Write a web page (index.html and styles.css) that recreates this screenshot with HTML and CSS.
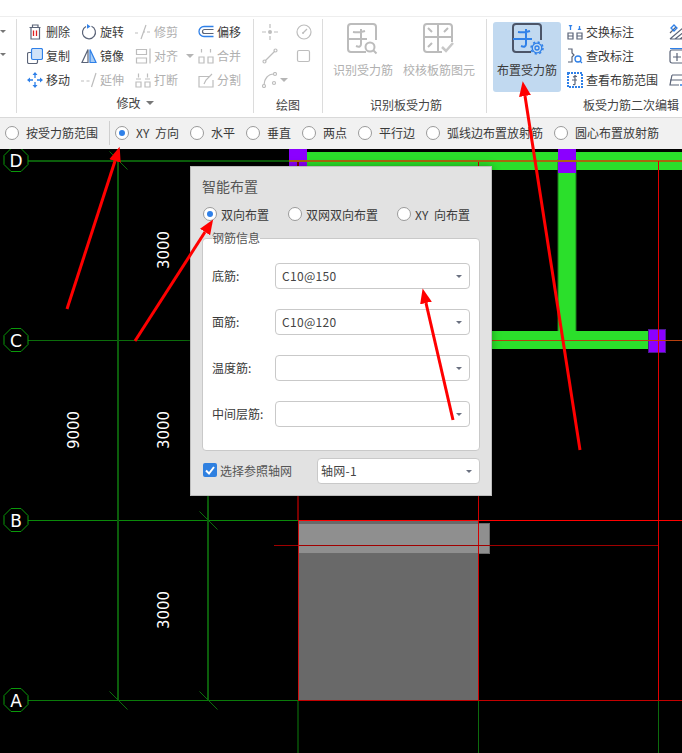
FILE: index.html
```html
<!DOCTYPE html>
<html lang="zh">
<head>
<meta charset="utf-8">
<title>智能布置</title>
<link rel="stylesheet" href="styles.css">
</head>
<body>
<div class="page">
  <div class="topbar"></div>

  <div class="ribbon">
    <div class="group group-cut">
      <span class="mini-caret"></span>
      <span class="mini-caret"></span>
    </div>

    <div class="group group-modify">
      <div class="tool-grid">
        <div class="tool"><svg class="ic" viewBox="0 0 16 16"><path class="s-dark" d="M2.5 3.5h11M4 3.5V15h8.500V3.500M5.500 3.500V1h5.500v2.500"/><path class="s-red" d="M6.500 6.500v5.500M9.500 6.500v5.500"/></svg>删除</div>
        <div class="tool"><svg class="ic" viewBox="0 0 16 16"><path class="s-dark" d="M10.500 2.300A6.500 6.500 0 1 1 5 2.500"/><path class="f-blue" d="M6 0l3.500 2.500L6 4.800z"/></svg>旋转</div>
        <div class="tool off"><svg class="ic" viewBox="0 0 16 16"><path class="s-gray" d="M11 1L6 15M0 9h3M8 8h2M12 8h3"/></svg>修剪</div>
        <div class="tool"><svg class="ic" viewBox="0 0 16 16"><path class="s-blue" d="M15.500 2.500H6a5 5 0 0 0 0 10h9.500"/><path class="s-dark" d="M15.500 5.500H6.500a2 2 0 0 0 0 4h9"/></svg>偏移</div>

        <div class="tool"><svg class="ic" viewBox="0 0 16 16"><rect class="s-dark" x="0.500" y="4.500" width="10" height="11" rx="1.500"/><rect class="f-tint" x="4.500" y="0.500" width="11" height="11" rx="1.500"/></svg>复制</div>
        <div class="tool"><svg class="ic" viewBox="0 0 16 16"><path class="s-dark" d="M7 1.500L1 14.500h6z"/><path class="f-tintb" d="M9 1.500l6 13H9z"/></svg>镜像</div>
        <div class="tool off tool-caret"><svg class="ic" viewBox="0 0 16 16"><path class="s-gray" d="M1.500 1.500h10v5h-10zM1.500 10h10v5h-10zM15 .5v15"/></svg>对齐<span class="caret caret-gray"></span></div>
        <div class="tool off"><svg class="ic" viewBox="0 0 16 16"><path class="s-gray" d="M1 9h5v6H1zM10 9h5v6h-5zM3.500 1v3.500M12.500 1v3.500"/></svg>合并</div>

        <div class="tool"><svg class="ic" viewBox="0 0 16 16"><path class="s-blue" d="M8 3v3M8 10v3M3 8h3M10 8h3"/><path class="f-blue" d="M8 0l2.500 3h-5zM8 16l2.500-3h-5zM0 8l3-2.500v5zM16 8l-3-2.500v5z"/></svg>移动</div>
        <div class="tool off"><svg class="ic" viewBox="0 0 16 16"><path class="s-gray" d="M15 1l-4.500 14M0 9h3M5.500 9h3"/></svg>延伸</div>
        <div class="tool off"><svg class="ic" viewBox="0 0 16 16"><path class="s-gray" d="M1 10h5v5H1zM10 10h5v5h-5zM3.500 1.500v4M1 7h5M12.500 1.500v4M10 7h5"/></svg>打断</div>
        <div class="tool off"><svg class="ic" viewBox="0 0 16 16"><path class="s-gray" d="M11 4.500H1V15h14V8M6 12l2-4 6-6"/></svg>分割</div>
      </div>
      <div class="group-label label-up">修改<span class="caret caret-label"></span></div>
    </div>

    <div class="group group-draw">
      <div class="draw-grid">
        <svg class="ic" viewBox="0 0 16 16"><circle class="f-gray" cx="8" cy="8" r="2"/><path class="s-gray" d="M8 0v4M8 12v4M0 8h4M12 8h4"/></svg>
        <svg class="ic" viewBox="0 0 16 16"><circle class="s-gray" cx="8" cy="8" r="7"/><path class="s-gray" d="M7 9l4-4"/><circle class="f-gray" cx="7" cy="9" r="1"/></svg>
        <svg class="ic" viewBox="0 0 16 16"><path class="s-gray" d="M3 13L13 3"/><circle class="s-gray" cx="2.500" cy="13.500" r="1.500"/><circle class="s-gray" cx="13.500" cy="2.500" r="1.500"/></svg>
        <svg class="ic" viewBox="0 0 16 16"><rect class="s-gray" x="1.500" y="2.500" width="12" height="11" rx="1.500"/></svg>
        <div class="draw-arc"><svg class="ic" viewBox="0 0 16 16"><path class="s-gray" d="M2 13C2 7 6 2 12 2"/><circle class="s-gray" cx="2" cy="14" r="1.500"/><circle class="s-gray" cx="13" cy="2" r="1.500"/><circle class="s-gray" cx="12" cy="11" r="1.500"/></svg><span class="caret caret-gray"></span></div>
      </div>
      <div class="group-label label-down">绘图</div>
    </div>

    <div class="group group-recog">
      <div class="big-row">
        <div class="big-tool off wide-5">
          <svg class="big-ic" viewBox="0 0 30 30"><path class="s-gray2" d="M19 29H4a3 3 0 0 1-3-3V4a3 3 0 0 1 3-3h22a3 3 0 0 1 3 3v13"/><path class="s-gray2" d="M6 9q6 1 12-1M1 16h19M14 6v15q0 4-5 2"/><circle class="s-gray2" cx="23" cy="24" r="4.500"/><path class="s-gray2" d="M26.500 27.500l3 3"/></svg>
          <span>识别受力筋</span>
        </div>
        <div class="big-tool off wide-6">
          <svg class="big-ic" viewBox="0 0 30 30"><path class="s-gray2" d="M19 29H4a3 3 0 0 1-3-3V4a3 3 0 0 1 3-3h22a3 3 0 0 1 3 3v15M15 1v28M1 14h28M5 5l4 4M25 5l-4 4M5 24l4-4"/><path class="s-gray3" d="M19 24l4 4 7-8"/></svg>
          <span>校核板筋图元</span>
        </div>
      </div>
      <div class="group-label label-down2">识别板受力筋</div>
    </div>

    <div class="group group-edit">
      <div class="edit-row">
        <div class="big-tool active">
          <svg class="big-ic" viewBox="0 0 30 30"><path class="s-dark2" d="M19 29H4a3 3 0 0 1-3-3V4a3 3 0 0 1 3-3h22a3 3 0 0 1 3 3v13"/><path class="s-blue2" d="M6 9q6 1 12-1M1 16h19M14 6v15q0 4-5 2"/><circle class="s-blue" cx="25" cy="25" r="2"/><circle class="s-blue" cx="25" cy="25" r="4.800"/><circle class="s-teeth" cx="25" cy="25" r="6"/></svg>
          <span>布置受力筋</span>
        </div>
        <div class="edit-col">
          <div class="tool"><svg class="ic" viewBox="0 0 16 16"><path class="s-dark" d="M1 9h5v6H1zM10 9h5v6h-5zM1 12h5M10 12h5"/><path class="s-blue" d="M3.500 2v4M12.500 2v4"/><path class="f-blue" d="M1.500 1h4l-2 2.500zM10.500 6h4l-2-2.500z"/></svg>交换标注</div>
          <div class="tool"><svg class="ic" viewBox="0 0 16 16"><path class="s-dark" d="M1 1h4v4l2 2-2 2v5H1"/><circle class="s-blue" cx="11" cy="11" r="3"/><path class="s-blue" d="M13 13l2 2"/></svg>查改标注</div>
          <div class="tool"><svg class="ic ic-box" viewBox="0 0 16 16"><rect class="s-blue-dash" x="1" y="1" width="14" height="14"/><path class="s-dark" d="M6 5q2-1 4-.5M8 3v9q0 1-2 .5M5 8h5"/></svg>查看布筋范围</div>
        </div>
        <div class="edit-col edit-col-cut">
          <svg class="ic" viewBox="0 0 16 16"><path class="s-dark" d="M1 15L15 3M6 15l9-7M1 9l6-6M11 15l4-3M1 15h14"/><path class="s-blue" d="M5 1l3 3-3 3-3-3z"/></svg>
          <svg class="ic" viewBox="0 0 16 16"><rect class="s-dark" x="1" y="2" width="15" height="13" rx="2"/><path class="s-dark" d="M8 5v8M4 9h8"/><path class="s-blue" d="M1 .5h15"/></svg>
          <svg class="ic" viewBox="0 0 16 16"><path class="s-dark" d="M3 3h13M3 3L1 13h9M1 8h14"/><path class="s-blue" d="M11 13h5"/></svg>
        </div>
      </div>
      <div class="group-label label-edit">板受力筋二次编辑</div>
    </div>
  </div>

  <div class="optbar">
    <label class="opt"><span class="radio"></span>按受力筋范围</label>
    <span class="opt-sep"></span>
    <label class="opt"><span class="radio on"></span>XY 方向</label>
    <label class="opt"><span class="radio"></span>水平</label>
    <label class="opt"><span class="radio"></span>垂直</label>
    <label class="opt"><span class="radio"></span>两点</label>
    <label class="opt"><span class="radio"></span>平行边</label>
    <label class="opt"><span class="radio"></span>弧线边布置放射筋</label>
    <label class="opt"><span class="radio"></span>圆心布置放射筋</label>
  </div>

  <div class="canvas">
    <svg class="drawing" viewBox="0 149 682 604" width="682" height="604">
      <!-- slab -->
      <rect x="298" y="520" width="180" height="180" fill="#696969"/>
      <rect x="298.500" y="523.500" width="191" height="30" fill="#8f8f8f" stroke="#6a6a6a"/>

      <!-- beams -->
      <rect x="307" y="152" width="375" height="18" fill="#2bdf2b"/>
      <rect x="558" y="160" width="18" height="180" fill="#2bdf2b" stroke="#1d7a1d" stroke-width="1"/>
      <rect x="480" y="331" width="170" height="18" fill="#2bdf2b"/>
      <rect x="559" y="325" width="16" height="12" fill="#2bdf2b"/>
      <rect x="289" y="149" width="18" height="24" fill="#8b00ff"/>
      <rect x="558" y="149" width="18" height="24" fill="#8b00ff"/>
      <rect x="648.500" y="329.500" width="17" height="23" fill="#8b00ff" stroke="#4b1a90"/>

      <g shape-rendering="crispEdges" fill="none">
        <!-- axes -->
        <path d="M28 160.500H289" stroke="#0b5d0b" stroke-width="2"/>
        <path d="M28 340.500H300" stroke="#0b6d0b"/>
        <path d="M28 520.500H298" stroke="#0a8a0a"/>
        <path d="M28 700.500H298" stroke="#0a7a0a"/>
        <path d="M118 160V700" stroke="#0b5d0b" stroke-width="2"/>
        <path d="M208 480V700" stroke="#0b5d0b" stroke-width="2"/>
        <path d="M298 701V753" stroke="#063f06" stroke-width="2"/>
        <path d="M478.500 701V753" stroke="#0d6a0d"/>
        <path d="M658.500 701V753" stroke="#0d6a0d"/>
        <!-- red layout lines -->
        <path d="M298 160V520" stroke="#7a0000" stroke-width="2"/>
        <path d="M478.500 160V700" stroke="#d00000"/>
        <path d="M658.500 160V700" stroke="#e00000"/>
        <path d="M289 160.500H682" stroke="#a8680f" stroke-width="2"/>
        <path d="M480 340.500H682" stroke="#b8400f"/>
        <path d="M298 520.500H682" stroke="#ff0000" stroke-width="1"/>
        <path d="M274 545.500H658" stroke="#a00000"/>
        <path d="M298 700.500H682" stroke="#c40000"/>
        <path d="M298.500 520V700" stroke="#d01010"/>
      </g>
      <path d="M658.500 161V340" stroke="#e00000" shape-rendering="crispEdges"/>

      <!-- ticks -->
      <g stroke="#0b6d0b" stroke-width="1" fill="none">
        <path d="M109.500 151.500l18 18"/>
        <path d="M199.500 511.500l18 18"/>
        <path d="M109.500 691.500l18 18"/>
        <path d="M199.500 691.500l18 18"/>
      </g>

      <!-- axis bubbles -->
      <g class="bubble">
        <polygon points="11,149 21,149 28,156 28,165 21,172 11,172 4,165 4,156" transform="translate(0 -0.500)"/>
        <polygon points="11,329 21,329 28,336 28,345 21,352 11,352 4,345 4,336" transform="translate(0 -0.500)"/>
        <polygon points="11,509 21,509 28,516 28,525 21,532 11,532 4,525 4,516" transform="translate(0 -0.500)"/>
        <polygon points="11,689 21,689 28,696 28,705 21,712 11,712 4,705 4,696" transform="translate(0 -0.500)"/>
      </g>
      <g class="bubble-text">
        <text x="16" y="166.500">D</text>
        <text x="16" y="346.500">C</text>
        <text x="16" y="526.500">B</text>
        <text x="16" y="706.500">A</text>
      </g>
      <g class="dim-text">
        <text transform="translate(169 250) rotate(-90)">3000</text>
        <text transform="translate(169 430) rotate(-90)">3000</text>
        <text transform="translate(169 610) rotate(-90)">3000</text>
        <text transform="translate(79 430) rotate(-90)">9000</text>
      </g>
    </svg>

    <div class="dialog">
      <div class="dlg-title">智能布置</div>
      <div class="dlg-radios">
        <label class="dlg-opt"><span class="radio on"></span>双向布置</label>
        <label class="dlg-opt"><span class="radio"></span>双网双向布置</label>
        <label class="dlg-opt"><span class="radio"></span>XY 向布置</label>
      </div>
      <div class="rebar-box">
        <div class="legend">钢筋信息</div>
        <div class="field"><span class="field-label">底筋:</span><div class="select">C10@150</div></div>
        <div class="field"><span class="field-label">面筋:</span><div class="select">C10@120</div></div>
        <div class="field"><span class="field-label">温度筋:</span><div class="select"></div></div>
        <div class="field"><span class="field-label">中间层筋:</span><div class="select"></div></div>
      </div>
      <div class="dlg-bottom">
        <label class="check-wrap"><span class="check"><svg viewBox="0 0 14 14" width="14" height="14"><path d="M3 7.500l3 3 5-6.500" fill="none" stroke="#fff" stroke-width="2"/></svg></span>选择参照轴网</label>
        <div class="select select-grid">轴网-1</div>
      </div>
    </div>
  </div>

  <svg class="arrows" viewBox="0 0 682 753" width="682" height="753">
    <defs>
      <marker id="head" markerUnits="userSpaceOnUse" markerWidth="16" markerHeight="14" refX="0" refY="7" orient="auto">
        <path d="M0 1L15 7 0 13z" fill="#ff0000"/>
      </marker>
    </defs>
    <g class="arrow-lines">
      <line x1="67" y1="309" x2="115" y2="161" marker-end="url(#head)"/>
      <line x1="135" y1="341" x2="205" y2="232" marker-end="url(#head)"/>
      <line x1="453" y1="420" x2="426" y2="303" marker-end="url(#head)"/>
      <line x1="580" y1="450" x2="525" y2="96" marker-end="url(#head)"/>
    </g>
  </svg>
</div>
</body>
</html>
```
FILE: styles.css
```css
* { box-sizing: border-box; }

html, body {
  margin: 0;
  padding: 0;
  background: #fff;
}

.page {
  position: relative;
  width: 682px;
  height: 753px;
  overflow: hidden;
  display: flex;
  flex-direction: column;
  font-family: "Noto Sans CJK SC", "Liberation Sans", sans-serif;
  font-size: 12px;
  color: #3a3a3a;
}

.topbar {
  height: 17px;
  flex: none;
  background: #fff;
  border-bottom: 1px solid #eeeeee;
}

/* ribbon */
.ribbon {
  height: 101px;
  flex: none;
  display: flex;
  align-items: flex-start;
  padding-top: 2px;
  background: #fff;
  border-bottom: 1px solid #d9d9d9;
  overflow: hidden;
}

.group {
  height: 94px;
  flex: none;
  display: flex;
  flex-direction: column;
  border-right: 1px solid #dcdcdc;
}

.group-cut {
  width: 17px;
  padding: 11px 0 0 0;
  gap: 20px;
}

.mini-caret {
  width: 0;
  height: 0;
  border-left: 3px solid transparent;
  border-right: 3px solid transparent;
  border-top: 3px solid #777;
}

.group-modify { width: 237px; }
.group-draw { width: 69px; }
.group-recog { width: 164px; }
.group-edit { width: 195px; border-right: 0; overflow: hidden; }

.tool-grid {
  display: grid;
  grid-template-columns: 54px 54px 63px 1fr;
  grid-auto-rows: 24px;
  padding: 1px 0 0 10px;
  height: 73px;
}

.tool {
  display: flex;
  align-items: center;
  gap: 3px;
  white-space: nowrap;
  height: 24px;
  line-height: 22px;
}

.tool.off { color: #b0b0b0; }
.tool-caret .caret { margin-left: 5px; }

.ic {
  width: 16px;
  height: 16px;
  flex: none;
  display: block;
}

.s-dark, .s-blue, .s-gray, .s-red, .s-gray2, .s-gray3, .s-dark2, .s-blue2, .s-blue-dash, .s-teeth {
  fill: none;
}
.s-dark { stroke: #5b6478; stroke-width: 1.2; }
.s-blue { stroke: #2f80e8; stroke-width: 1.3; }
.s-teeth { stroke: #2f80e8; stroke-width: 1.5; stroke-dasharray: 2.2 2.5; }
.s-gray { stroke: #bdbdbd; stroke-width: 1.2; }
.s-red { stroke: #e02020; stroke-width: 1.3; }
.s-gray2 { stroke: #bcbcbc; stroke-width: 2; }
.s-gray3 { stroke: #c8c8c8; stroke-width: 2.500; }
.s-dark2 { stroke: #4c5568; stroke-width: 2; }
.s-blue2 { stroke: #2f80e8; stroke-width: 2; }
.s-blue-dash { stroke: #2f80e8; stroke-width: 2; stroke-dasharray: 2 1; }
.f-blue { fill: #2f80e8; }
.f-gray { fill: #bdbdbd; }
.f-tint { fill: #cfe2f8; stroke: #2f80e8; stroke-width: 1.2; }
.f-tintb { fill: #a9cdf5; stroke: #2f80e8; stroke-width: 1.2; }

.caret {
  width: 0;
  height: 0;
  flex: none;
  border-left: 4px solid transparent;
  border-right: 4px solid transparent;
  border-top: 4px solid #999;
}
.caret-gray { border-top-color: #b5b5b5; }
.caret-label { display: inline-block; margin-left: 5px; vertical-align: 2px; border-top-color: #777; }

.group-label {
  flex: none;
  height: 21px;
  display: flex;
  align-items: center;
  justify-content: center;
  white-space: nowrap;
  color: #444;
}
.label-up { padding-top: 0; }
.label-down { padding-top: 3px; }
.label-down2 { padding-top: 4px; margin-left: 3px; }
.label-edit { justify-content: flex-start; padding: 3px 0 0 96px; }

/* draw group */
.draw-grid {
  display: grid;
  grid-template-columns: 34px 34px;
  grid-auto-rows: 24px;
  align-items: center;
  padding: 1px 0 0 8px;
  height: 73px;
}

.draw-arc {
  display: flex;
  align-items: center;
  gap: 2px;
}

/* big tools */
.big-row {
  display: flex;
  height: 73px;
  gap: 10px;
  padding-left: 10px;
}

.big-tool {
  display: flex;
  flex-direction: column;
  align-items: center;
  padding-top: 4px;
  white-space: nowrap;
}
.big-tool.off { color: #b0b0b0; }
.big-tool.off .big-ic { margin-left: -2px; }
.big-tool span { margin-top: 8px; line-height: 18px; }
.wide-5 { width: 60px; }
.wide-6 { width: 72px; }

.big-ic {
  width: 30px;
  height: 30px;
  display: block;
  flex: none;
  overflow: visible;
}

.edit-row {
  display: flex;
  height: 73px;
  padding-left: 6px;
}

.big-tool.active {
  flex: none;
  width: 68px;
  height: 70px;
  margin-top: 3px;
  padding-top: 1px;
  background: #c1d9f0;
  border-radius: 3px;
}

.edit-col {
  width: 102px;
  margin-left: 6px;
  padding-top: 1px;
  flex: none;
  display: flex;
  flex-direction: column;
}

.edit-col-cut {
  margin-left: 0;
  gap: 8px;
  padding-top: 5px;
}

/* options */
.optbar {
  height: 31px;
  flex: none;
  display: flex;
  align-items: center;
  gap: 11px;
  padding: 0 0 2px 5px;
  background: #f1f1f1;
  white-space: nowrap;
  word-spacing: 3px;
}

.opt {
  display: flex;
  align-items: center;
  gap: 7px;
}

.opt-sep {
  width: 1px;
  height: 24px;
  margin-right: -6px;
  background: #cfcfcf;
}

.radio {
  width: 14px;
  height: 14px;
  flex: none;
  border: 1px solid #9a9a9a;
  border-radius: 50%;
  background: #fff;
  display: flex;
  align-items: center;
  justify-content: center;
}

.radio.on::after {
  content: "";
  width: 6px;
  height: 6px;
  border-radius: 50%;
  background: #2f80e8;
}

/* canvas */
.canvas {
  position: relative;
  flex: 1;
  background: #000;
  overflow: hidden;
}

.drawing {
  position: absolute;
  left: 0;
  top: 0;
  display: block;
}

.bubble polygon { fill: none; stroke: #0a9a0a; stroke-width: 1; }
.bubble-text text {
  fill: #fff;
  font-family: "DejaVu Sans", sans-serif;
  font-size: 17px;
  text-anchor: middle;
}
.dim-text text {
  fill: #fff;
  font-family: "DejaVu Sans", sans-serif;
  font-size: 15px;
  text-anchor: middle;
}

/* dialog */
.dialog {
  position: absolute;
  left: 190px;
  top: 17px;
  width: 302px;
  height: 330px;
  padding: 0 11px;
  background: #e2e2e2;
  border: 1px solid #bdbdbd;
  box-shadow: 0 0 8px rgba(0, 0, 0, 0.35);
}

.dlg-title {
  margin-top: 9px;
  height: 20px;
  line-height: 20px;
  font-size: 14px;
  color: #555;
}

.dlg-radios {
  margin-top: 10px;
  padding-left: 1px;
  height: 16px;
  display: flex;
  gap: 19px;
  word-spacing: 3px;
}

.dlg-opt {
  display: flex;
  align-items: center;
  gap: 4px;
}

.rebar-box {
  position: relative;
  margin-top: 16px;
  height: 213px;
  padding: 24px 9px 0;
  background: #fff;
  border: 1px solid #c9c9c9;
  border-radius: 4px;
  display: flex;
  flex-direction: column;
  gap: 20px;
}

.legend {
  position: absolute;
  left: 9px;
  top: -9px;
  height: 16px;
  line-height: 16px;
  background: linear-gradient(#e2e2e2 50%, #fff 50%);
  color: #555;
}

.field {
  display: flex;
  align-items: center;
  height: 26px;
}

.field-label { width: 63px; flex: none; white-space: nowrap; padding-bottom: 2px; }

.select {
  position: relative;
  width: 195px;
  height: 26px;
  line-height: 24px;
  padding-left: 6px;
  background: #fff;
  border: 1px solid #c9c9c9;
  border-radius: 4px;
  color: #444;
  letter-spacing: 0.3px;
}

.select::after {
  content: "";
  position: absolute;
  right: 7px;
  top: 11px;
  width: 0;
  height: 0;
  border-left: 3px solid transparent;
  border-right: 3px solid transparent;
  border-top: 3px solid #6a7080;
}

.dlg-bottom {
  margin-top: 7px;
  height: 26px;
  display: flex;
  align-items: center;
  justify-content: space-between;
}

.check-wrap {
  display: flex;
  align-items: center;
  gap: 3px;
  padding: 0 0 2px 1px;
  color: #555;
}

.check {
  width: 14px;
  height: 14px;
  border-radius: 2px;
  background: #2f80e0;
  display: block;
}
.check svg { display: block; }

.select-grid {
  width: 163px;
  padding-left: 3px;
}

/* annotation arrows */
.arrows {
  position: absolute;
  left: 0;
  top: 0;
  pointer-events: none;
}

.arrow-lines line {
  stroke: #ff0000;
  stroke-width: 3;
}
```
